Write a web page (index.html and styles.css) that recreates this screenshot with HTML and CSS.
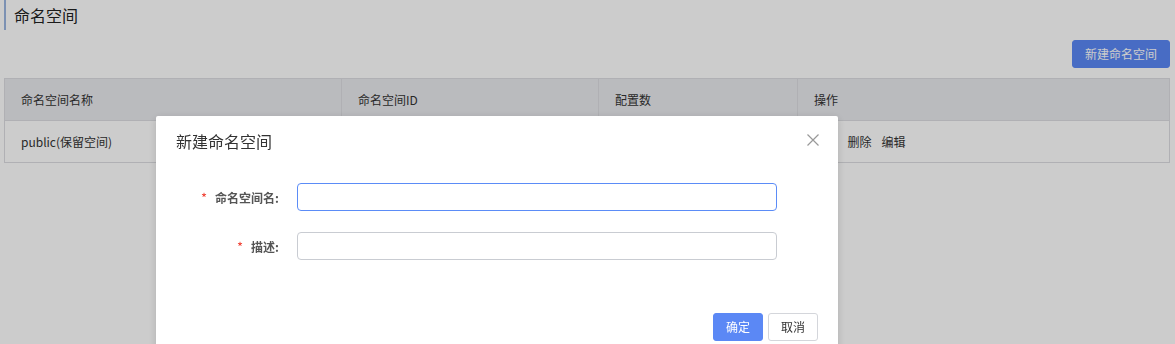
FILE: index.html
```html
<!DOCTYPE html>
<html lang="zh-CN">
<head>
<meta charset="utf-8">
<title>命名空间</title>
<link rel="stylesheet" href="styles.css">
</head>
<body>
<div class="page">
  <h1 class="page-title">命名空间</h1>
  <div class="toolbar">
    <button class="btn btn-primary btn-create">新建命名空间</button>
  </div>
  <table class="ns-table">
    <colgroup>
      <col class="c1"><col class="c2"><col class="c3"><col class="c4">
    </colgroup>
    <thead>
      <tr><th>命名空间名称</th><th>命名空间ID</th><th>配置数</th><th>操作</th></tr>
    </thead>
    <tbody>
      <tr>
        <td>public(保留空间)</td>
        <td></td>
        <td>0</td>
        <td><span class="op">详情</span><span class="op">删除</span><span class="op">编辑</span></td>
      </tr>
    </tbody>
  </table>
</div>
<div class="mask"></div>
<div class="modal">
  <div class="modal-header">
    <span class="modal-title">新建命名空间</span>
    <span class="modal-close">
      <svg width="12" height="12" viewBox="0 0 12 12"><path d="M0.5 0.5 L11.5 11.5 M11.5 0.5 L0.5 11.5" stroke="#999" stroke-width="1.2" fill="none"/></svg>
    </span>
  </div>
  <div class="modal-body">
    <div class="form-item">
      <label class="form-label"><span class="req">*</span>命名空间名:</label>
      <input class="form-input focused" type="text">
    </div>
    <div class="form-item">
      <label class="form-label"><span class="req">*</span>描述:</label>
      <input class="form-input" type="text">
    </div>
  </div>
  <div class="modal-footer">
    <button class="btn btn-primary btn-sm">确定</button>
    <button class="btn btn-default btn-sm">取消</button>
  </div>
</div>
</body>
</html>
```
FILE: styles.css
```css
* { box-sizing: border-box; }
html, body {
  margin: 0;
  padding: 0;
  background: #fff;
  font-family: "Noto Sans CJK SC", "Liberation Sans", sans-serif;
  color: #333;
  overflow: hidden;
}
.page {
  padding: 0 5px 0 4px;
}
.page-title {
  margin: 0;
  height: 30px;
  line-height: 30px;
  font-size: 16px;
  font-weight: normal;
  border-left: 2px solid #9cb6e0;
  padding-left: 8px;
  color: #222;
}
.toolbar {
  display: flex;
  justify-content: flex-end;
  margin-top: 10px;
  margin-bottom: 10px;
}
.btn {
  font-family: inherit;
  font-size: 12px;
  height: 28px;
  border-radius: 3px;
  border: 1px solid transparent;
  padding: 0;
  cursor: pointer;
  line-height: 26px;
}
.btn-primary {
  background: #5b88f5;
  border-color: #5b88f5;
  color: #fff;
}
.btn-default {
  background: #fff;
  border-color: #d4d6db;
  color: #333;
}
.btn-create {
  width: 98px;
}
.ns-table {
  width: 100%;
  border-collapse: collapse;
  border: 1px solid #dcdde1;
  font-size: 12px;
}
.c1 { width: 337px; }
.c2 { width: 257px; }
.c3 { width: 199px; }
.ns-table th {
  background: #e9eaee;
  height: 42px;
  text-align: left;
  font-weight: normal;
  padding: 0 16px;
  border-right: 1px solid #dcdde1;
  border-bottom: 1px solid #dcdde1;
  color: #333;
}
.ns-table td {
  height: 42px;
  padding: 0 16px 1px 16px;
  border-bottom: 1px solid #dcdde1;
  color: #333;
}
.op { margin-right: 10px; }
.mask {
  position: fixed;
  inset: 0;
  background: rgba(0, 0, 0, 0.2);
  z-index: 1;
}
.modal {
  position: fixed;
  left: 156px;
  top: 116px;
  width: 682px;
  height: 260px;
  background: #fff;
  border-radius: 2px;
  box-shadow: 0 2px 8px rgba(0, 0, 0, 0.15);
  z-index: 2;
}
.modal-header {
  height: 50px;
  padding: 13px 20px;
  display: flex;
  justify-content: space-between;
  align-items: center;
}
.modal-title {
  font-size: 16px;
  line-height: 24px;
  color: #333;
}
.modal-close {
  display: flex;
  margin-right: -1px;
  margin-top: -2px;
}
.modal-body {
  padding: 17px 20px 0 20px;
  display: flex;
  flex-direction: column;
  gap: 21px;
}
.form-item {
  display: flex;
  align-items: center;
}
.form-label {
  width: 121px;
  text-align: right;
  padding-right: 18px;
  font-size: 12px;
  font-weight: bold;
  color: #555;
}
.req {
  color: #f04134;
  margin-right: 8px;
  font-weight: normal;
  font-size: 13px;
}
.form-input {
  width: 480px;
  height: 28px;
  border: 1px solid #c9ccd2;
  border-radius: 4px;
  outline: none;
  font-family: inherit;
  font-size: 12px;
  padding: 0 7px;
}
.form-input.focused {
  border-color: #5b8cf7;
}
.modal-footer {
  display: flex;
  justify-content: flex-end;
  gap: 5px;
  padding: 0 20px;
  margin-top: 53px;
}
.btn-sm {
  width: 50px;
}
```
